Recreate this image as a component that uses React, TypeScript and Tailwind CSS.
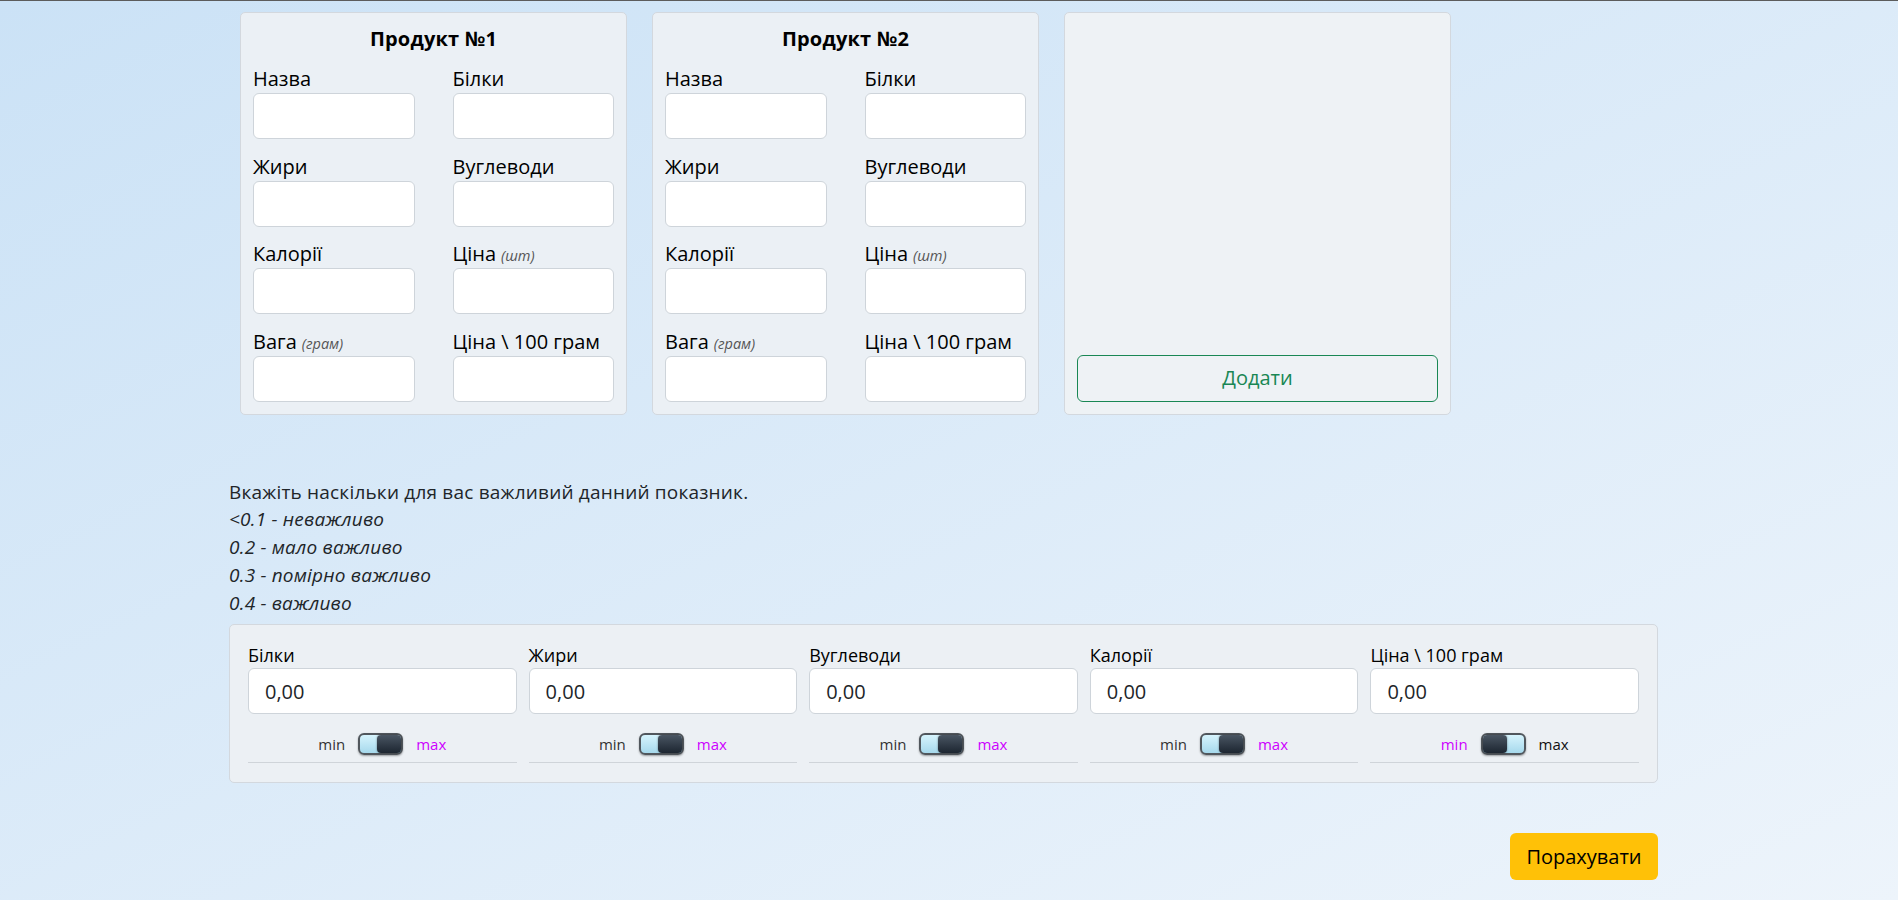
import React from "react";

type Field = { label: string; hint?: string };

const productFields: Field[] = [
  { label: "Назва" },
  { label: "Білки" },
  { label: "Жири" },
  { label: "Вуглеводи" },
  { label: "Калорії" },
  { label: "Ціна", hint: "(шт)" },
  { label: "Вага", hint: "(грам)" },
  { label: "Ціна \\ 100 грам" },
];

const weightFields: { label: string; max: boolean }[] = [
  { label: "Білки", max: true },
  { label: "Жири", max: true },
  { label: "Вуглеводи", max: true },
  { label: "Калорії", max: true },
  { label: "Ціна \\ 100 грам", max: false },
];

function ProductCard({ n }: { n: number }) {
  return (
    <div className="w-[387px] rounded-[5px] border border-[#d3d8de] bg-[#ebf0f5] p-[12px]">
      <h5 className="mb-[12px] h-[28px] text-center text-[20px] font-bold leading-[28px] tracking-[0.2px] text-black">
        Продукт №{n}
      </h5>
      <div className="grid grid-cols-2 gap-x-[38px] gap-y-[13.5px]">
        {productFields.map((f) => (
          <div key={f.label} className="flex flex-col">
            <label className="h-[28px] whitespace-nowrap text-[20px] leading-[28px] text-black">
              {f.label}
              {f.hint && (
                <span className="ml-[5px] text-[14.5px] italic text-[#555]">{f.hint}</span>
              )}
            </label>
            <input
              type="text"
              className="h-[46px] w-full rounded-[6px] border border-[#ced4da] bg-white px-3 text-[18px] outline-none"
            />
          </div>
        ))}
      </div>
    </div>
  );
}

function AddCard() {
  return (
    <div className="flex w-[387px] flex-col justify-end rounded-[5px] border border-[#d3d8de] bg-[#eef2f5] p-[12px]">
      <button
        type="button"
        className="h-[47px] w-full rounded-[6px] border border-[#198754] text-[20px] text-[#198754]"
      >
        Додати
      </button>
    </div>
  );
}

function Toggle({ max }: { max: boolean }) {
  return (
    <div
      className={
        "flex h-[22px] w-[45px] rounded-[6px] border-2 border-[#51575d] bg-gradient-to-b from-[#d6f4fd] to-[#a6d9ec] shadow-[0_1px_2px_rgba(0,0,0,0.35)] " +
        (max ? "justify-end" : "justify-start")
      }
    >
      <div className="h-full w-[24px] rounded-[4px] bg-gradient-to-b from-[#4a5663] to-[#1d2631] shadow-[0_0_2px_rgba(0,0,0,0.5)]" />
    </div>
  );
}

function WeightField({ label, max }: { label: string; max: boolean }) {
  return (
    <div className="flex flex-col">
      <label className="h-[25px] whitespace-nowrap text-[18px] leading-[25px] text-black">{label}</label>
      <input
        type="text"
        defaultValue="0,00"
        className="h-[46px] w-full rounded-[6px] border border-[#ced4da] bg-white px-[16px] text-[20px] text-[#212529] outline-none"
      />
      <div className="flex items-center justify-center gap-[13px] border-b border-[#cfd4d9] pb-[7px] pt-[19px]">
        <span className={"text-[15px] leading-[22px] " + (max ? "text-[#333]" : "text-[#cc00ff]")}>min</span>
        <Toggle max={max} />
        <span className={"text-[15px] leading-[22px] " + (max ? "text-[#cc00ff]" : "text-[#111]")}>max</span>
      </div>
    </div>
  );
}

export default function App() {
  return (
    <div className="min-h-screen w-full border-t border-[#5c5c5c] bg-gradient-to-br from-[#cbe2f6] to-[#edf4fb] font-['Open_Sans',sans-serif] text-[#212529]">
      <div className="ml-[229px] w-[1429px] pb-[20px] pt-[11px]">
        <div className="flex gap-[25px] pl-[11px]">
          <ProductCard n={1} />
          <ProductCard n={2} />
          <AddCard />
        </div>

        <div className="mt-[64px] text-[19px] leading-[27.75px] tracking-[0.2px] text-[#212529]">
          <div>Вкажіть наскільки для вас важливий данний показник.</div>
          <div className="italic">&lt;0.1 - неважливо</div>
          <div className="italic">0.2 - мало важливо</div>
          <div className="italic">0.3 - помірно важливо</div>
          <div className="italic">0.4 - важливо</div>
        </div>

        <div className="mt-[7px] rounded-[5px] border border-[#d3d8de] bg-[#ecf0f4] px-[18px] pb-[19px] pt-[18px]">
          <div className="grid grid-cols-5 gap-x-[12px]">
            {weightFields.map((w) => (
              <WeightField key={w.label} label={w.label} max={w.max} />
            ))}
          </div>
        </div>

        <div className="mt-[50px] flex justify-end">
          <button
            type="button"
            className="h-[47px] w-[148px] rounded-[6px] bg-[#ffc107] text-[20px] text-black"
          >
            Порахувати
          </button>
        </div>
      </div>
    </div>
  );
}
